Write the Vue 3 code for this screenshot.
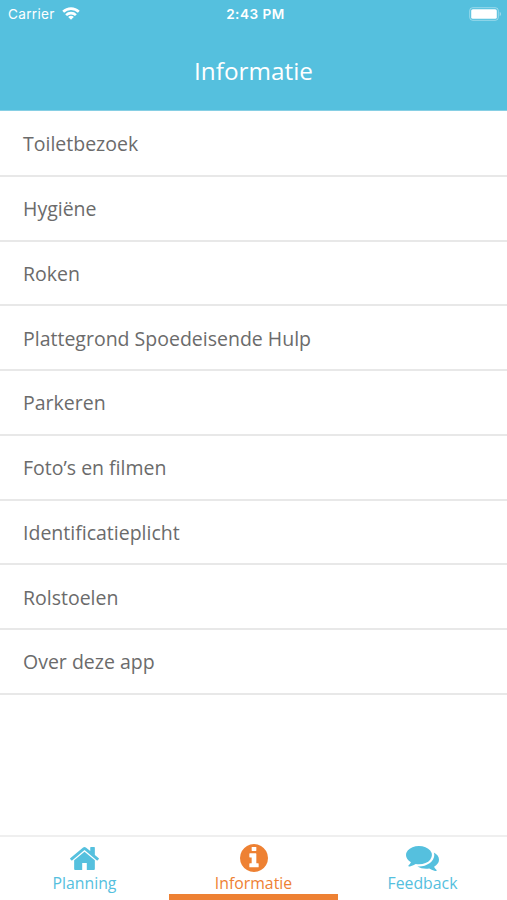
<script setup>
const items = [
  'Toiletbezoek',
  'Hygiëne',
  'Roken',
  'Plattegrond Spoedeisende Hulp',
  'Parkeren',
  'Foto’s en filmen',
  'Identificatieplicht',
  'Rolstoelen',
  'Over deze app',
]

const tabs = [
  {
    label: 'Planning',
    kind: 'home',
    viewBox: '89 253 1614 1283',
    path: 'M1472 992v480q0 26-19 45t-45 19h-384v-384h-256v384h-384q-26 0-45-19t-19-45v-480q0-1 .5-3t.5-3l575-474 575 474q1 2 1 6zm223-69l-62 74q-8 9-21 11h-3q-13 0-21-7l-692-577-692 577q-12 8-24 7-13-2-21-11l-62-74q-8-10-7-23.5t11-21.5l719-599q32-26 76-26t76 26l244 204v-195q0-14 9-23t23-9h192q14 0 23 9t9 23v408l219 182q10 8 11 21.5t-7 23.5z',
  },
  {
    label: 'Informatie',
    kind: 'info',
    active: true,
    viewBox: '128 128 1536 1536',
    path: 'M1152 1376v-160q0-14-9-23t-23-9h-96v-512q0-14-9-23t-23-9h-320q-14 0-23 9t-9 23v160q0 14 9 23t23 9h96v320h-96q-14 0-23 9t-9 23v160q0 14 9 23t23 9h448q14 0 23-9t9-23zm-128-896v-160q0-14-9-23t-23-9h-192q-14 0-23 9t-9 23v160q0 14 9 23t23 9h192q14 0 23-9t9-23zm640 416q0 209-103 385.5t-279.5 279.5-385.5 103-385.5-103-279.5-279.5-103-385.5 103-385.5 279.5-279.5 385.5-103 385.5 103 279.5 279.5 103 385.5z',
  },
  {
    label: 'Feedback',
    kind: 'comments',
    viewBox: '0 256 1792 1408',
    path: 'M1408 768q0 139-94 257t-256.5 186.5-353.5 68.5q-86 0-176-16-124 88-278 128-36 9-86 16h-3q-11 0-20.5-8t-11.5-21q-1-3-1-6.5t.5-6.5 2-6l2.5-5 3.5-5.5 4-5 4.5-5 4-4.5q5-6 23-25t26-29.5 22.5-29 25-38.5 20.5-44q-124-72-195-177t-71-224q0-139 94-257t256.5-186.5 353.5-68.5 353.5 68.5 256.5 186.5 94 257zm384 256q0 120-71 224.5t-195 176.5q10 24 20.5 44t25 38.5 22.5 29 26 29.5 23 25q1 1 4 4.5t4.5 5 4 5 3.5 5.5l2.5 5 2 6 .5 6.5-1 6.5q-3 14-13 22t-22 7q-50-7-86-16-154-40-278-128-90 16-176 16-271 0-472-132 58 4 88 4 161 0 309-45t264-129q125-92 192-212t67-254q0-77-23-152 129 71 204 178t75 230z',
  },
]
</script>

<template>
  <div class="screen">
    <header class="header">
      <div class="status">
        <div class="carrier">
          <span>Carrier</span>
          <svg class="wifi" viewBox="0 0 18 13" fill="none" stroke="#fff" stroke-width="2.6">
            <path d="M1.2 4.8a11.2 11.2 0 0 1 15.6 0" />
            <path d="M4.1 8.1a7 7 0 0 1 9.8 0" />
            <path d="M9 12.8 6.2 10a3.9 3.9 0 0 1 5.6 0z" fill="#fff" stroke="none" />
          </svg>
        </div>
        <div class="clock">2:43 PM</div>
        <div class="power">
          <svg class="battery" viewBox="0 0 33 14">
            <rect x="0.7" y="0.7" width="28.6" height="12.6" rx="3" fill="none" stroke="#fff" stroke-opacity="0.4" />
            <rect x="2.2" y="2.2" width="25.6" height="9.6" rx="1.6" fill="#fff" />
            <path d="M30.7 4.8q1.4.7 1.4 2.2t-1.4 2.2z" fill="#fff" fill-opacity="0.4" />
          </svg>
        </div>
      </div>
      <h1 class="title">Informatie</h1>
    </header>

    <ul class="list">
      <li v-for="item in items" :key="item" class="row">{{ item }}</li>
    </ul>

    <nav class="tabs">
      <div v-for="tab in tabs" :key="tab.label" class="tab" :class="{ active: tab.active }">
        <div class="icon-box">
          <svg :class="tab.kind" :viewBox="tab.viewBox" preserveAspectRatio="none" fill="currentColor">
            <path :d="tab.path" />
          </svg>
        </div>
        <span class="label">{{ tab.label }}</span>
      </div>
    </nav>
  </div>
</template>

<style>
body {
  margin: 0;
}
</style>

<style scoped>
.screen {
  box-sizing: border-box;
  display: flex;
  flex-direction: column;
  width: 100%;
  height: 900px;
  overflow: hidden;
  background: #fff;
  font-family: 'Open Sans', 'Noto Sans', sans-serif;
}

.header {
  box-sizing: border-box;
  flex: none;
  height: 111px;
  border-bottom: 1px solid #86cfe4;
  background: #55c0de;
  color: #fff;
}

.status {
  display: grid;
  grid-template-columns: 1fr auto 1fr;
  align-items: center;
  height: 27px;
  padding: 0 5px 0 8px;
  font-family: Inter, Roboto, sans-serif;
  font-size: 13.6px;
}

.carrier {
  display: flex;
  align-items: center;
  gap: 7px;
  letter-spacing: 0.32px;
}

.wifi {
  width: 18px;
  height: 13px;
}

.clock {
  padding-left: 1px;
  font-weight: 600;
  letter-spacing: 0.5px;
}

.power {
  display: flex;
  justify-content: flex-end;
}

.battery {
  width: 33px;
  height: 14px;
}

.title {
  margin: 26px 0 0;
  font-size: 24.3px;
  font-weight: 400;
  line-height: 36px;
  text-align: center;
}

.list {
  flex: 1;
  margin: 0;
  padding: 1px 0 0;
  list-style: none;
}

.row {
  box-sizing: border-box;
  display: flex;
  align-items: center;
  height: 64.75px;
  padding: 1px 23px 0;
  border-bottom: 2px solid #e8e8e8;
  color: #6b6b6b;
  font-size: 19.5px;
}

.tabs {
  display: grid;
  flex: none;
  grid-template-columns: repeat(3, 1fr);
  box-sizing: border-box;
  height: 65px;
  border-top: 2px solid #efefef;
}

.tab {
  box-sizing: border-box;
  display: flex;
  flex-direction: column;
  align-items: center;
  padding-top: 7px;
  border-bottom: 6px solid transparent;
  color: #55c0de;
}

.tab.active {
  border-bottom-color: #ee8133;
  color: #ee8133;
}

.icon-box {
  display: flex;
  align-items: center;
  height: 28px;
}

.icon-box svg {
  display: block;
}

.home {
  width: 29px;
  height: 23px;
}

.info {
  width: 28px;
  height: 28px;
}

.comments {
  width: 33px;
  height: 25px;
}

.label {
  font-size: 15.8px;
  line-height: 22px;
}
</style>
